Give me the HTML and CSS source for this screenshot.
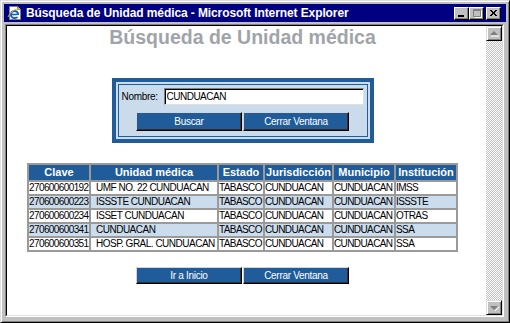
FILE: index.html
```html
<!DOCTYPE html>
<html lang="es">
<head>
    <meta charset="UTF-8">
    <title>Búsqueda de Unidad médica</title>
    <link rel="stylesheet" href="styles.css">
</head>
<body>
    <div class="window">
        <div class="titlebar">
            <svg class="app-icon" viewBox="0 0 16 16">
                <path d="M2.5 1.5h8l3 3v10h-11z" fill="#fff" stroke="#808080"/>
                <path d="M10.5 1.5v3h3" fill="#c0c0c0" stroke="#808080"/>
                <circle cx="7.5" cy="9.5" r="3.6" fill="none" stroke="#1060d0" stroke-width="2"/>
                <path d="M4.5 9.5h6" stroke="#1060d0" stroke-width="1.6"/>
                <path d="M9.5 11h3" stroke="#fff" stroke-width="2"/>
                <path d="M1 12c2-5 8-9 12-8" fill="none" stroke="#f0c000" stroke-width="1"/>
            </svg>
            <span class="title">Búsqueda de Unidad médica - Microsoft Internet Explorer</span>
            <div class="win-btns">
                <span class="win-btn">
                    <svg viewBox="0 0 11 9"><path d="M2 6h6v2H2z" fill="#000"/></svg>
                </span>
                <span class="win-btn">
                    <svg viewBox="0 0 11 9"><path d="M2.5 0.5h7v7h-7zM2.5 1.5h7" fill="none" stroke="#808080"/><path d="M3.5 8.5h7v-7" fill="none" stroke="#fff"/></svg>
                </span>
                <span class="win-btn close">
                    <svg viewBox="0 0 11 9"><path d="M2 1l6 6M3 1l6 6M8 1l-6 6M9 1l-6 6" stroke="#000" stroke-width="1"/></svg>
                </span>
            </div>
        </div>

        <div class="client">
            <div class="viewport">
                <div class="page">
                    <h1>Búsqueda de Unidad médica</h1>

                    <div class="search-box">
                        <div class="search-inner">
                            <div class="field-row">
                                <label for="nombre">Nombre:</label>
                                <input type="text" id="nombre" value="CUNDUACAN">
                            </div>
                            <div class="btn-row">
                                <button class="blue-btn">Buscar</button>
                                <button class="blue-btn">Cerrar Ventana</button>
                            </div>
                        </div>
                    </div>

                    <table class="results">
                        <colgroup>
                            <col class="c-clave">
                            <col class="c-unidad">
                            <col class="c-estado">
                            <col class="c-jur">
                            <col class="c-mun">
                            <col class="c-inst">
                        </colgroup>
                        <thead>
                            <tr>
                                <th>Clave</th>
                                <th>Unidad médica</th>
                                <th>Estado</th>
                                <th>Jurisdicción</th>
                                <th>Municipio</th>
                                <th>Institución</th>
                            </tr>
                        </thead>
                        <tbody>
                            <tr>
                                <td>270600600192</td>
                                <td class="unidad">UMF NO. 22 CUNDUACAN</td>
                                <td>TABASCO</td>
                                <td>CUNDUACAN</td>
                                <td>CUNDUACAN</td>
                                <td>IMSS</td>
                            </tr>
                            <tr>
                                <td>270600600223</td>
                                <td class="unidad">ISSSTE CUNDUACAN</td>
                                <td>TABASCO</td>
                                <td>CUNDUACAN</td>
                                <td>CUNDUACAN</td>
                                <td>ISSSTE</td>
                            </tr>
                            <tr>
                                <td>270600600234</td>
                                <td class="unidad">ISSET CUNDUACAN</td>
                                <td>TABASCO</td>
                                <td>CUNDUACAN</td>
                                <td>CUNDUACAN</td>
                                <td>OTRAS</td>
                            </tr>
                            <tr>
                                <td>270600600341</td>
                                <td class="unidad">CUNDUACAN</td>
                                <td>TABASCO</td>
                                <td>CUNDUACAN</td>
                                <td>CUNDUACAN</td>
                                <td>SSA</td>
                            </tr>
                            <tr>
                                <td>270600600351</td>
                                <td class="unidad">HOSP. GRAL. CUNDUACAN</td>
                                <td>TABASCO</td>
                                <td>CUNDUACAN</td>
                                <td>CUNDUACAN</td>
                                <td>SSA</td>
                            </tr>
                        </tbody>
                    </table>

                    <div class="btn-row bottom-btns">
                        <button class="blue-btn">Ir a Inicio</button>
                        <button class="blue-btn">Cerrar Ventana</button>
                    </div>
                </div>

                <div class="scrollbar">
                    <span class="scroll-btn">
                        <svg viewBox="0 0 12 11"><path d="M6 3l4 4H2z" fill="#808080"/><path d="M3 8h8" stroke="#fff"/></svg>
                    </span>
                    <span class="scroll-track"></span>
                    <span class="scroll-btn">
                        <svg viewBox="0 0 12 11"><path d="M2 4h8l-4 4z" fill="#808080"/><path d="M7 9l4-4" stroke="#fff"/></svg>
                    </span>
                </div>
            </div>
        </div>
    </div>
</body>
</html>
```

FILE: styles.css
```css
* {
    box-sizing: border-box;
}

body {
    margin: 0;
    font-family: "Liberation Sans", Arial, sans-serif;
    background-color: #c0c0c0;
    overflow: hidden;
}

/* window frame */
.window {
    width: 510px;
    height: 323px;
    background-color: #c0c0c0;
    border: 1px solid;
    border-color: #dfdfdf #000 #000 #dfdfdf;
    box-shadow: inset 1px 1px #fff, inset -1px -1px #808080;
    padding: 3px;
    display: flex;
    flex-direction: column;
}

.titlebar {
    height: 18px;
    flex: none;
    background-color: #000080;
    color: white;
    display: flex;
    align-items: center;
    padding: 0 5px 0 3px;
}

.app-icon {
    width: 16px;
    height: 16px;
    flex: none;
}

.title {
    margin-left: 3px;
    font-size: 12px;
    font-weight: bold;
    letter-spacing: -0.1px;
    white-space: nowrap;
}

.win-btns {
    margin-left: auto;
    display: flex;
}

.win-btn {
    width: 15px;
    height: 13px;
    background-color: #c0c0c0;
    border: 1px solid;
    border-color: #fff #000 #000 #fff;
    box-shadow: inset -1px -1px #808080;
    display: flex;
    align-items: center;
    justify-content: center;
}

.win-btn svg {
    width: 11px;
    height: 9px;
}

.win-btn.close {
    margin-left: 2px;
}

.client {
    flex: 1;
    margin: 2px 2px 2px 1px;
    border: 1px solid;
    border-color: #808080 #fff #fff #808080;
    display: flex;
}

.viewport {
    flex: 1;
    border: 1px solid;
    border-color: #000 #dfdfdf #dfdfdf #000;
    display: flex;
}

/* page content */
.page {
    flex: 1;
    background-color: white;
    padding-right: 8px;
    overflow: hidden;
}

h1 {
    margin: 0;
    font-size: 19.5px;
    line-height: 22px;
    text-align: center;
    color: #a0a4a8;
    font-weight: bold;
}

.search-box {
    width: 262px;
    height: 65px;
    margin: 30px auto 0;
    border: 4px solid #1f5c99;
    padding: 2px;
    background-color: #cadbec;
}

.search-inner {
    height: 100%;
    border: 1px solid #1f5c99;
    padding: 3px 3px 0;
}

.field-row {
    display: flex;
    align-items: center;
    height: 17px;
}

.field-row label {
    font-size: 10px;
    letter-spacing: -0.3px;
}

.field-row input {
    margin-left: auto;
    width: 200px;
    height: 17px;
    padding: 0 2px;
    border: 1px solid;
    border-color: #808080 #dfdfdf #dfdfdf #808080;
    box-shadow: inset 1px 1px #000;
    font-family: "Liberation Sans", Arial, sans-serif;
    font-size: 10px;
    letter-spacing: -0.5px;
    background-color: white;
}

.btn-row {
    display: flex;
    justify-content: center;
    gap: 1px;
    margin-top: 7px;
}

.blue-btn {
    width: 106px;
    height: 19px;
    padding: 0;
    background-color: #1f5c99;
    color: white;
    border: 1px solid;
    border-color: #d4d4d4 #000 #000 #d4d4d4;
    box-shadow: inset -1px -1px #303030;
    font-family: "Liberation Sans", Arial, sans-serif;
    font-size: 10px;
    letter-spacing: -0.3px;
}

/* results table */
.results {
    margin: 20px auto 0;
    table-layout: fixed;
    width: 431px;
    border-collapse: separate;
    border-spacing: 2px;
    background-color: #9a9a9a;
    font-size: 10px;
}

.c-clave { width: 60px; }
.c-unidad { width: 126px; }
.c-estado { width: 44px; }
.c-jur { width: 67px; }
.c-mun { width: 60px; }
.c-inst { width: 60px; }

.results th {
    background-color: #1f5c99;
    color: white;
    font-size: 11px;
    font-weight: bold;
    height: 15px;
    line-height: 15px;
    padding: 0;
    white-space: nowrap;
    overflow: hidden;
}

.results td {
    background-color: white;
    height: 12px;
    line-height: 12px;
    padding: 0;
    letter-spacing: -0.6px;
    white-space: nowrap;
}

.results tbody tr:nth-child(even) td {
    background-color: #cbdcec;
}

.results td.unidad {
    padding-left: 5px;
    letter-spacing: -0.5px;
}

.bottom-btns {
    margin-top: 15px;
}

.bottom-btns .blue-btn {
    height: 17px;
}

/* scrollbar */
.scrollbar {
    width: 16px;
    flex: none;
    display: flex;
    flex-direction: column;
    background-image: repeating-conic-gradient(#c0c0c0 0% 25%, #fff 0% 50%);
    background-size: 2px 2px;
}

.scroll-btn {
    height: 15px;
    background-color: #c0c0c0;
    border: 1px solid;
    border-color: #dfdfdf #000 #000 #dfdfdf;
    box-shadow: inset 1px 1px #fff, inset -1px -1px #808080;
    display: flex;
    align-items: center;
    justify-content: center;
}

.scroll-btn svg {
    width: 12px;
    height: 11px;
}

.scroll-track {
    flex: 1;
}
```
